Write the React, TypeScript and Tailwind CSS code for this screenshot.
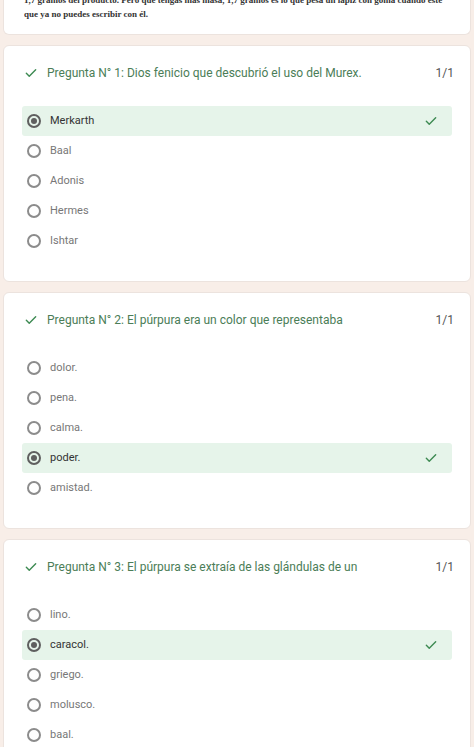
import React from "react";

type Question = {
  n: number;
  title: string;
  options: string[];
  correct: number;
};

const questions: Question[] = [
  {
    n: 1,
    title: "Dios fenicio que descubrió el uso del Murex.",
    options: ["Merkarth", "Baal", "Adonis", "Hermes", "Ishtar"],
    correct: 0,
  },
  {
    n: 2,
    title: "El púrpura era un color que representaba",
    options: ["dolor.", "pena.", "calma.", "poder.", "amistad."],
    correct: 3,
  },
  {
    n: 3,
    title: "El púrpura se extraía de las glándulas de un",
    options: ["lino.", "caracol.", "griego.", "molusco.", "baal."],
    correct: 1,
  },
];

const Tick = ({ className }: { className?: string }) => (
  <svg viewBox="0 0 24 24" className={className} fill="none" stroke="currentColor" strokeWidth={2.4} strokeLinecap="round" strokeLinejoin="round">
    <path d="M4 12.5l5 5L20 6.5" />
  </svg>
);

const Radio = ({ checked }: { checked: boolean }) =>
  checked ? (
    <span className="flex h-[14px] w-[14px] items-center justify-center rounded-full border-2 border-[#5f5f5f]">
      <span className="h-[6px] w-[6px] rounded-full bg-[#5f5f5f]" />
    </span>
  ) : (
    <span className="h-[14px] w-[14px] rounded-full border-2 border-[#8c8c8c]" />
  );

const QuestionCard = ({ q }: { q: Question }) => (
  <div className="rounded-md border border-[#ece3de] bg-white pt-[19px] pb-[25px] pl-[18px] pr-[18px]">
    <div className="flex h-[16px] items-center">
      <Tick className="ml-[2px] h-[14px] w-[14px] text-[#3d8a52]" />
      <span className="ml-[9px] text-[12px] text-[#4b7d57]">
        Pregunta N° {q.n}: {q.title}
      </span>
      <span className="ml-auto mr-[-2px] text-[12px] text-[#555]">1/1</span>
    </div>
    <div className="mt-[25px] flex flex-col">
      {q.options.map((o, i) => {
        const sel = i === q.correct;
        return (
          <div
            key={o}
            className={
              sel
                ? "flex h-[30px] items-center rounded-[3px] bg-[#e6f4ea] pl-[5px] pr-[14px]"
                : "flex h-[30px] items-center pl-[5px] pr-[14px]"
            }
          >
            <Radio checked={sel} />
            <span className={sel ? "ml-[9px] text-[11px] text-[#333]" : "ml-[9px] text-[11px] text-[#777]"}>{o}</span>
            {sel && <Tick className="ml-auto h-[14px] w-[14px] text-[#3d8a52]" />}
          </div>
        );
      })}
    </div>
  </div>
);

export default function App() {
  return (
    <div
      className="h-[747px] overflow-hidden bg-[#f8eee8] pl-[3px] pr-[3px]"
      style={{ fontFamily: "Roboto, 'Noto Sans', sans-serif" }}
    >
      <div className="-mt-[10px] rounded-b-md border border-t-0 border-[#ece3de] bg-white pl-[20px] pr-[20px] pb-[13px] pt-[3px]">
        <div
          className="overflow-hidden text-[9px] font-bold leading-[14px] text-[#333]"
          style={{ fontFamily: "'Liberation Serif', serif" }}
        >
          <p className="whitespace-nowrap">
            1,7 gramos del producto. Pero que tengas más masa, 1,7 gramos es lo que pesa un lápiz con goma cuando esté
          </p>
          <p>que ya no puedes escribir con él.</p>
        </div>
      </div>
      <div className="mt-[10px] flex flex-col gap-[10px]">
        {questions.map((q) => (
          <QuestionCard key={q.n} q={q} />
        ))}
      </div>
    </div>
  );
}
